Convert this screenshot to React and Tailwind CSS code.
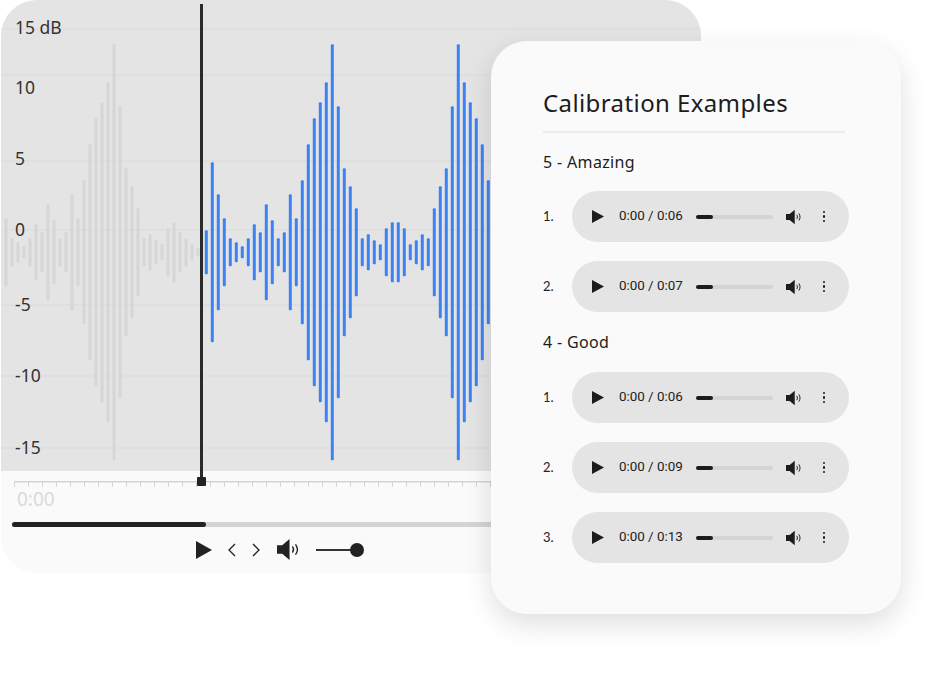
const GREY = [34, 14, 10, 6, 14, 28, 20, 48, 32, 14, 20, 58, 34, 72, 108, 134, 150, 170, 208, 146, 84, 66, 44, 14, 18, 12, 8, 24, 30, 20, 14, 8, 4];
const BLUE = [22, 90, 58, 34, 14, 10, 6, 14, 28, 20, 48, 32, 14, 20, 58, 34, 72, 108, 134, 150, 170, 208, 146, 84, 66, 44, 14, 18, 12, 8, 24, 30, 30, 24, 8, 12, 18, 14, 44, 66, 84, 146, 208, 170, 150, 134, 108, 72];
const GRID = [29, 75, 161, 230, 305, 376, 448];
const LABELS = [['15 dB', 33.5], ['10', 93.5], ['5', 165], ['0', 235.5], ['-5', 311], ['-10', 382], ['-15', 454]];
const CENTER = 252.3;

function Waveform() {
  return (
    <svg width="700" height="471" className="absolute left-0 top-0">
      {GRID.map((y) => (
        <rect key={y} x="0" y={y - 0.5} width="700" height="1" fill="#d9d9d9" />
      ))}
      {GREY.map((h, i) => (
        <rect key={i} x={3.5 + i * 6} y={CENTER - h} width="3" height={h * 2} rx="1" fill="#d6d6d6" />
      ))}
      {BLUE.map((h, i) => (
        <rect key={i} x={203.8 + i * 6} y={CENTER - h} width="3" height={h * 2} rx="1" fill="#3b82f6" />
      ))}
      {LABELS.map(([t, y]) => (
        <text key={t} x="14" y={y} fontSize="17.5" fill="#333333">{t}</text>
      ))}
    </svg>
  );
}

function Ruler() {
  const ticks = [];
  for (let x = 13; x < 490; x += 14) ticks.push(x);
  return (
    <svg width="490" height="16" className="block">
      <rect x="13" y="10" width="477" height="1.500" fill="#d4d4d4" />
      {ticks.map((x) => (
        <rect key={x} x={x} y="10" width="1" height="6" fill="#d4d4d4" />
      ))}
    </svg>
  );
}

function Speaker({ size = 22, color = '#2a2a2a' }) {
  return (
    <svg width={size} height={size} viewBox="0 0 22 22" fill="none">
      <path d="M0 7h5l7-6v20l-7-6H0z" fill={color} />
      <path d="M15 8.500c1 1.500 1 3.500 0 5" stroke={color} strokeWidth="1.300" strokeLinecap="round" />
      <path d="M18 6.500c1.800 2.700 1.800 6.300 0 9" stroke={color} strokeWidth="1.300" strokeLinecap="round" />
    </svg>
  );
}

function Player({ time }) {
  return (
    <div className="flex h-[51px] w-[278px] items-center rounded-full bg-[#e4e4e4] pl-5 font-['Roboto',sans-serif] text-[#222222]">
      <svg width="12" height="13" viewBox="0 0 12 13" className="shrink-0">
        <path d="M0 0l12 6.500L0 13z" fill="#1c1c1c" />
      </svg>
      <span className="ml-[15px] w-[64px] whitespace-nowrap text-[13.400px]">{time}</span>
      <div className="ml-[13px] h-1 w-[77px] rounded-full bg-[#d4d4d4]">
        <div className="h-1 w-[17px] rounded-full bg-[#1c1c1c]" />
      </div>
      <div className="ml-[13px]">
        <Speaker size={16} color="#1c1c1c" />
      </div>
      <div className="ml-[21px] flex flex-col gap-[2px]">
        <span className="block size-[2.500px] rounded-full bg-[#1c1c1c]" />
        <span className="block size-[2.500px] rounded-full bg-[#1c1c1c]" />
        <span className="block size-[2.500px] rounded-full bg-[#1c1c1c]" />
      </div>
    </div>
  );
}

function Row({ n, time }) {
  return (
    <div className="flex items-center">
      <span className="w-[29px] font-['Lato',sans-serif] text-[13px] text-[#222222]">{n}.</span>
      <Player time={time} />
    </div>
  );
}

function CalibrationCard() {
  return (
    <div className="absolute left-[491px] top-[41px] h-[573px] w-[410px] rounded-[36px] bg-[#fafafa] px-[52px] pt-[45px] shadow-[0_10px_28px_rgba(0,0,0,0.13)]">
      <h2 className="text-[24px] leading-[34px] tracking-[0.4px] text-[#1c1c1c]">Calibration Examples</h2>
      <div className="mt-[11px] h-[2px] w-[302px] bg-[#ececec]" />
      <h3 className="mt-[17px] text-[16px] leading-[24px] tracking-[0.35px] text-[#1c1c1c]">5 - Amazing</h3>
      <div className="mt-[17px] flex flex-col gap-[19px]">
        <Row n="1" time="0:00 / 0:06" />
        <Row n="2" time="0:00 / 0:07" />
      </div>
      <h3 className="mt-[18px] text-[16px] leading-[24px] tracking-[0.35px] text-[#1c1c1c]">4 - Good</h3>
      <div className="mt-[18px] flex flex-col gap-[19px]">
        <Row n="1" time="0:00 / 0:06" />
        <Row n="2" time="0:00 / 0:09" />
        <Row n="3" time="0:00 / 0:13" />
      </div>
    </div>
  );
}

export default function App() {
  return (
    <div className="relative h-[681px] w-[939px] overflow-hidden bg-white pl-px font-['Noto_Sans',sans-serif]">
      <div className="relative h-[573px] w-[700px] overflow-hidden rounded-[36px] bg-[#fafafa]">
        <div className="relative h-[471px] bg-[#e4e4e4]">
          <Waveform />
        </div>
        <Ruler />
        <div className="ml-[16px] text-[19px] leading-[24px] text-[#dadada]">0:00</div>
        <div className="ml-[11px] mt-[11px] h-[5px] w-[680px] rounded-full bg-[#d4d4d4]">
          <div className="h-[5px] w-[194px] rounded-full bg-[#222222]" />
        </div>
        <div className="ml-[195px] mt-[11px] flex items-center">
          <svg width="16" height="18" viewBox="0 0 16 18">
            <path d="M0 0l16 9L0 18z" fill="#222222" />
          </svg>
          <svg width="10" height="14" viewBox="0 0 10 14" fill="none" className="ml-[15px]">
            <path d="M8 1L2 7l6 6" stroke="#222222" strokeWidth="1.300" />
          </svg>
          <svg width="10" height="14" viewBox="0 0 10 14" fill="none" className="ml-[14px]">
            <path d="M2 1l6 6-6 6" stroke="#222222" strokeWidth="1.300" />
          </svg>
          <div className="ml-[16px]">
            <Speaker size={23} color="#222222" />
          </div>
          <div className="ml-[16px] flex items-center">
            <div className="h-[2px] w-[36px] bg-[#333333]" />
            <div className="-ml-[2px] size-[14px] rounded-full bg-[#222222]" />
          </div>
        </div>
        {/* playhead */}
        <div className="absolute left-[199px] top-[4px] h-[475px] w-[3px] bg-[#2a2a2a]" />
        <div className="absolute left-[196px] top-[477px] size-[9px] rounded-[1px] bg-[#222222]" />
      </div>
      <CalibrationCard />
    </div>
  );
}
